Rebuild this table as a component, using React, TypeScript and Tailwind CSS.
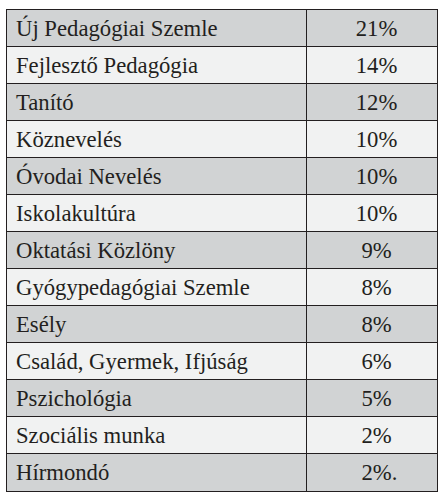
const rows: { name: string; value: string; dot?: boolean }[] = [
  { name: 'Új Pedagógiai Szemle', value: '21%' },
  { name: 'Fejlesztő Pedagógia', value: '14%' },
  { name: 'Tanító', value: '12%' },
  { name: 'Köznevelés', value: '10%' },
  { name: 'Óvodai Nevelés', value: '10%' },
  { name: 'Iskolakultúra', value: '10%' },
  { name: 'Oktatási Közlöny', value: '9%' },
  { name: 'Gyógypedagógiai Szemle', value: '8%' },
  { name: 'Esély', value: '8%' },
  { name: 'Család, Gyermek, Ifjúság', value: '6%' },
  { name: 'Pszichológia', value: '5%' },
  { name: 'Szociális munka', value: '2%' },
  { name: 'Hírmondó', value: '2%', dot: true },
];

export default function App() {
  return (
    <div className="w-[446px] h-[501px] bg-white pt-[9px] pl-[6px] font-['Times_New_Roman','Liberation_Serif',Tinos,'DejaVu_Serif',serif] text-[#231f20]">
      <div className="w-[432px] border border-[#231f20]">
        {rows.map((row, i) => (
          <div
            key={row.name}
            className={`flex h-[37px] ${i < rows.length - 1 ? 'border-b border-[#231f20]' : 'h-[36px]'} ${
              i % 2 === 0 ? 'bg-[#d1d3d4]' : 'bg-[#f1f2f2]'
            }`}
          >
            <div className="w-[300px] border-r border-[#231f20] pl-[9px] pt-[2px] text-[22.7px] leading-[34px] whitespace-nowrap">
              {row.name}
            </div>
            <div className="flex-1 pl-[9px] pt-[2px] text-center text-[22.7px] leading-[34px] whitespace-nowrap">
              {row.value}
              {row.dot && <span className="inline-block w-0">.</span>}
            </div>
          </div>
        ))}
      </div>
    </div>
  );
}
